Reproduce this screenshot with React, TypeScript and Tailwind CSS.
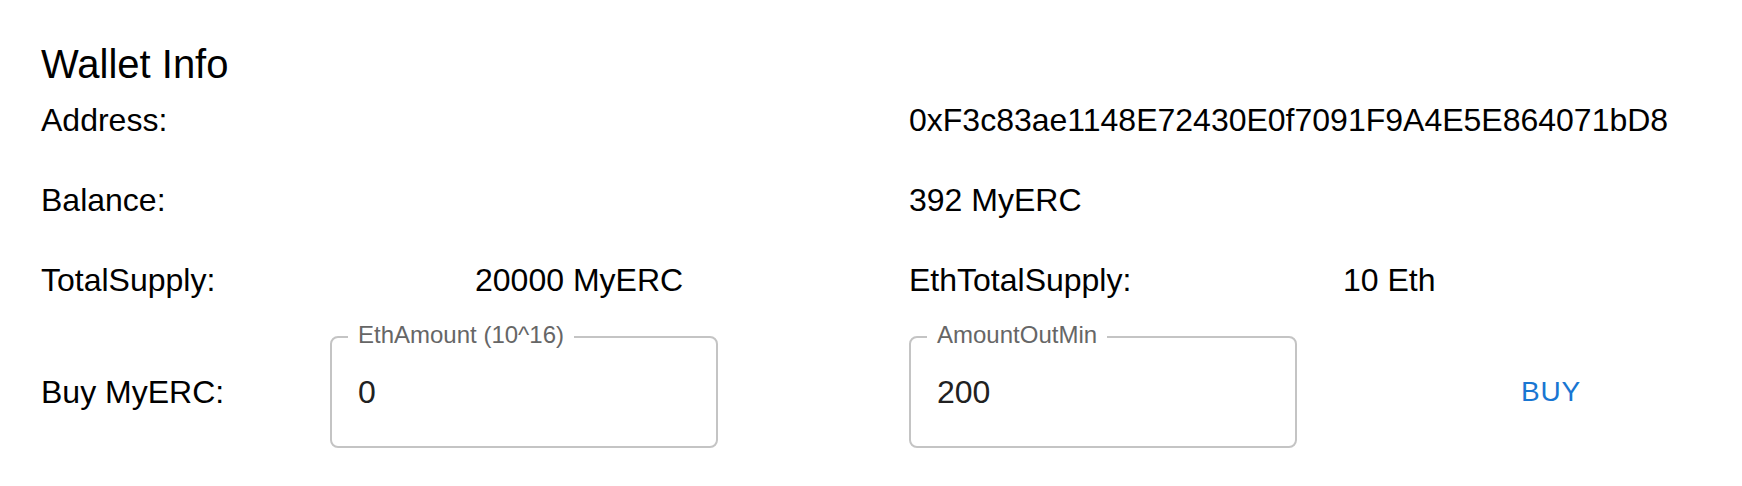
import React from "react";

function OutlinedField({ label, value }: { label: string; value: string }) {
  return (
    <div className="relative flex h-[112px] w-[388px] items-center rounded-[8px] border-2 border-[#c4c4c4] pl-[26px]">
      <span className="absolute left-[16px] top-[-15px] bg-white px-[10px] text-[24px] leading-[24px] text-[#666666]">
        {label}
      </span>
      <span className="text-[32px] leading-[48px] text-[#212121]">{value}</span>
    </div>
  );
}

function InfoRow({ items }: { items: string[] }) {
  return (
    <div className="grid h-[48px] grid-cols-[434px_434px_434px_1fr] text-[32px] leading-[48px] whitespace-nowrap">
      {items.map((item, i) => (
        <div key={i}>{item}</div>
      ))}
    </div>
  );
}

export default function App() {
  return (
    <div
      className="min-h-[486px] w-[1742px] bg-white pl-[41px] pt-[32px] text-black"
      style={{ fontFamily: '"Liberation Sans", Arial, Helvetica, sans-serif' }}
    >
      <h6 className="pt-[1px] text-[40px] leading-[63px]">Wallet Info</h6>
      <div className="flex flex-col gap-[32px]">
        <InfoRow items={["Address:", "", "0xF3c83ae1148E72430E0f7091F9A4E5E864071bD8", ""]} />
        <InfoRow items={["Balance:", "", "392 MyERC", ""]} />
        <InfoRow items={["TotalSupply:", "20000 MyERC", "EthTotalSupply:", "10 Eth"]} />
        <div className="grid h-[112px] grid-cols-[289px_579px_612px_1fr] items-center">
          <div className="text-[32px] leading-[48px]">Buy MyERC:</div>
          <OutlinedField label="EthAmount (10^16)" value="0" />
          <OutlinedField label="AmountOutMin" value="200" />
          <div>
            <button className="text-[28px] leading-[48px] font-medium tracking-[0.8px] text-[#1976d2]">
              BUY
            </button>
          </div>
        </div>
      </div>
    </div>
  );
}
